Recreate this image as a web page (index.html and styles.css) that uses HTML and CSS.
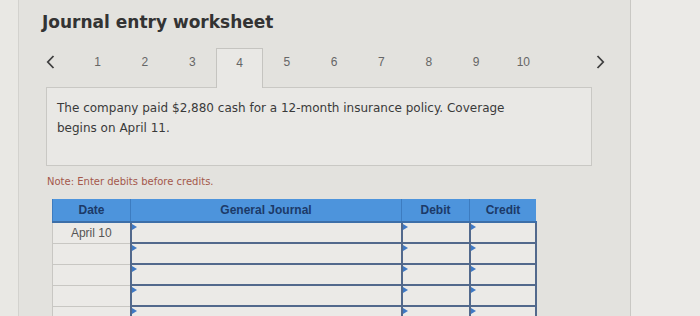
FILE: index.html
```html
<!DOCTYPE html>
<html>
<head>
<meta charset="utf-8">
<link rel="stylesheet" href="styles.css">
</head>
<body>
<div class="screen">
  <div class="gutter"></div>
  <div class="page">
    <h1 class="title">Journal entry worksheet</h1>
    <div class="tabs">
      <span class="arrow prev"><svg width="9" height="14" viewBox="0 0 9 14"><path d="M7.5 1 L1.8 7 L7.5 13" fill="none" stroke="#3f3f3f" stroke-width="1.8"/></svg></span>
      <span class="tab">1</span>
      <span class="tab">2</span>
      <span class="tab">3</span>
      <span class="tab active">4</span>
      <span class="tab">5</span>
      <span class="tab">6</span>
      <span class="tab">7</span>
      <span class="tab">8</span>
      <span class="tab">9</span>
      <span class="tab">10</span>
      <span class="arrow next"><svg width="9" height="14" viewBox="0 0 9 14"><path d="M1.5 1 L7.2 7 L1.5 13" fill="none" stroke="#3f3f3f" stroke-width="1.8"/></svg></span>
    </div>
    <div class="desc">The company paid $2,880 cash for a 12-month insurance policy. Coverage<br>begins on April 11.</div>
    <p class="note">Note: Enter debits before credits.</p>
    <table class="journal">
      <thead>
        <tr><th class="c-date">Date</th><th class="c-acct">General Journal</th><th class="c-debit">Debit</th><th class="c-credit">Credit</th></tr>
      </thead>
      <tbody>
        <tr><td class="date">April 10</td><td class="in"></td><td class="in"></td><td class="in"></td></tr>
        <tr><td class="date"></td><td class="in"></td><td class="in"></td><td class="in"></td></tr>
        <tr><td class="date"></td><td class="in"></td><td class="in"></td><td class="in"></td></tr>
        <tr><td class="date"></td><td class="in"></td><td class="in"></td><td class="in"></td></tr>
        <tr><td class="date"></td><td class="in"></td><td class="in"></td><td class="in"></td></tr>
      </tbody>
    </table>
  </div>
  <div class="side"></div>
</div>
</body>
</html>
```
FILE: styles.css
```css
html, body {
  margin: 0;
  padding: 0;
  background: #e4e3df;
  overflow: hidden;
}
.screen {
  display: flex;
  width: 700px;
  height: 316px;
  background: #e4e3df;
}
.gutter {
  width: 18px;
  flex: none;
  background: #e9e8e4;
  border-right: 1px solid #d3d2ce;
}
.page {
  width: 612px;
  flex: none;
  padding: 10px 0 0 23px;
  box-sizing: border-box;
  border-right: 1px solid #c9c8c4;
  background: #e3e2de;
}
.side {
  flex: 1;
  background: #ebeae7;
}
.title {
  margin: 0;
  font-family: "DejaVu Sans", Verdana, sans-serif;
  font-weight: bold;
  font-size: 17px;
  line-height: 24px;
  color: #333;
}
.tabs {
  display: flex;
  align-items: stretch;
  height: 40px;
  margin-top: 14px;
  margin-left: 4px;
  position: relative;
  z-index: 1;
  margin-bottom: -1px;
}
.arrow {
  display: flex;
  align-items: center;
  padding-bottom: 12px;
  box-sizing: border-box;
}
.prev {
  width: 28px;
}
.next {
  margin-left: 49px;
}
.tab {
  width: 47.3px;
  display: flex;
  justify-content: center;
  align-items: center;
  padding-bottom: 12px;
  box-sizing: border-box;
  font-family: "Liberation Sans", Arial, sans-serif;
  font-size: 12px;
  color: #666;
}
.tab.active {
  background: #e9e8e5;
  border: 1px solid #c5c4c0;
  border-bottom: none;
}
.desc {
  width: 546px;
  height: 79px;
  box-sizing: border-box;
  margin-left: 4px;
  border: 1px solid #c9c8c4;
  background: #e9e8e5;
  padding: 10px 10px;
  font-family: "DejaVu Sans", Verdana, sans-serif;
  font-size: 12px;
  line-height: 20px;
  color: #3a3a3a;
}
.note {
  margin: 9px 0 0 5px;
  font-family: "DejaVu Sans", Verdana, sans-serif;
  font-size: 10px;
  line-height: 14px;
  color: #a4584b;
}
.journal {
  margin: 10px 0 0 10px;
  border-collapse: collapse;
  font-family: "Liberation Sans", Arial, sans-serif;
  font-size: 12px;
}
.journal th {
  background: #4d94dc;
  color: #1c3a68;
  font-weight: bold;
  height: 22px;
  padding: 0;
  border-left: 1px solid #3d7cc0;
  border-bottom: 2px solid #3d6fa8;
}
.c-date { width: 77px; }
.c-acct { width: 270px; }
.c-debit { width: 67px; }
.c-credit { width: 66px; }
.journal td {
  height: 19px;
  padding: 0;
  background: #ebeae7;
}
.journal td.date {
  border-left: 1px solid #c8c7c3;
  border-bottom: 1px solid #c8c7c3;
  color: #555;
  text-align: center;
}
.journal td.in {
  position: relative;
  border-left: 2px solid #52698c;
  border-bottom: 2px solid #52698c;
}
.journal td.in:last-child {
  border-right: 2px solid #52698c;
}
.journal td.in::before {
  content: "";
  position: absolute;
  left: 0;
  top: 1px;
  border-left: 5px solid #3f79c4;
  border-top: 3px solid transparent;
  border-bottom: 3px solid transparent;
}
```
